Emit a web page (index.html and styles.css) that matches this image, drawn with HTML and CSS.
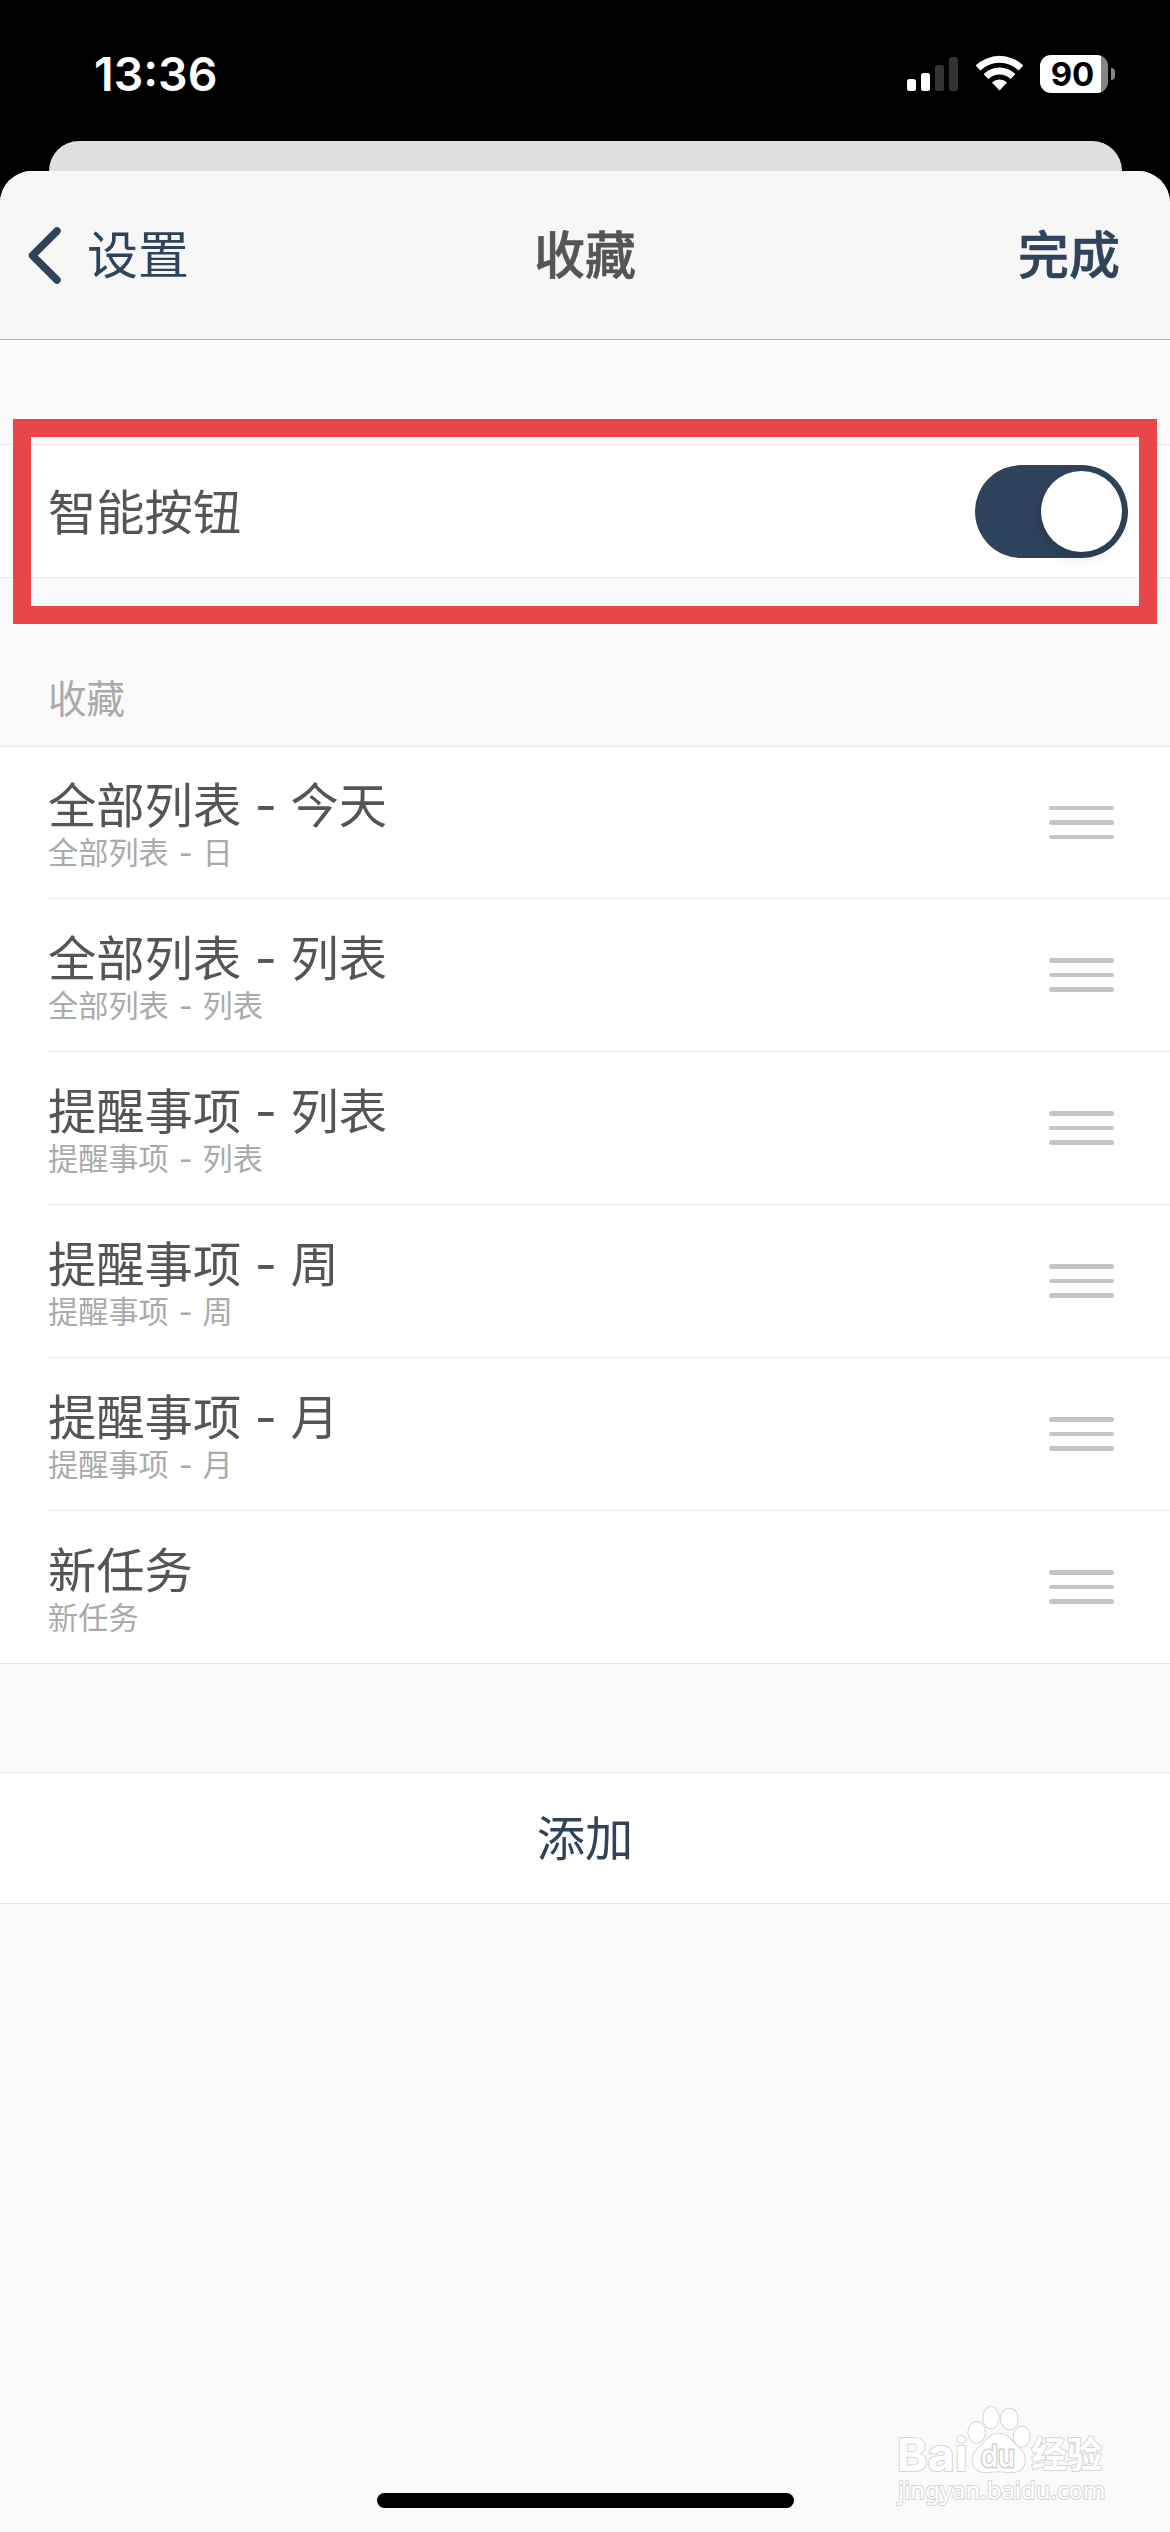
FILE: index.html
```
<!DOCTYPE html>
<html lang="zh-CN">
<head>
  <meta charset="UTF-8">
  <meta name="viewport" content="width=device-width, initial-scale=1.0">
  <title>收藏</title>
  <link rel="stylesheet" href="styles.css">
</head>
<body>
  <div class="status-bar">
    <div class="time">13:36</div>
    <div class="status-icons">
      <svg class="signal" viewBox="0 0 51 34" aria-hidden="true">
        <rect x="0" y="22" width="9" height="12" rx="2.5" fill="#fff"/>
        <rect x="14" y="16" width="9" height="18" rx="2.5" fill="#fff"/>
        <rect x="28" y="8" width="9" height="26" rx="2.5" fill="#333"/>
        <rect x="42" y="0" width="9" height="34" rx="2.5" fill="#333"/>
      </svg>
      <svg class="wifi" viewBox="0 0 49 36" aria-hidden="true">
        <path d="M0.6 10.6A34.2 34.2 0 0 1 48.4 10.6L43.6 15.6A27.3 27.3 0 0 0 5.4 15.6Z"/>
        <path d="M8.6 19A22.6 22.6 0 0 1 40.4 19L35.6 24A15.7 15.7 0 0 0 13.4 24Z"/>
        <path d="M16.9 27.6A11 11 0 0 1 32.1 27.6L24.5 35.5Z"/>
      </svg>
      <div class="battery">
        <div class="battery-body">90</div>
        <div class="battery-cap"></div>
      </div>
    </div>
  </div>

  <div class="back-sheet"></div>

  <div class="sheet">
    <div class="nav">
      <div class="nav-back">
        <svg viewBox="0 0 33 57" aria-hidden="true">
          <path d="M29 4L4.5 28.5L29 53"/>
        </svg>
        <span>设置</span>
      </div>
      <div class="nav-title">收藏</div>
      <div class="nav-done">完成</div>
    </div>

    <div class="switch-row">
      <span class="row-title">智能按钮</span>
      <div class="toggle" role="switch" aria-checked="true"><div class="knob"></div></div>
      <div class="highlight"></div>
    </div>

    <div class="section-title">收藏</div>

    <div class="list">
      <div class="item">
        <div class="item-text">
          <div class="row-title">全部列表 - 今天</div>
          <div class="row-sub">全部列表 - 日</div>
        </div>
        <div class="handle"><i></i><i></i><i></i></div>
      </div>
      <div class="item">
        <div class="item-text">
          <div class="row-title">全部列表 - 列表</div>
          <div class="row-sub">全部列表 - 列表</div>
        </div>
        <div class="handle"><i></i><i></i><i></i></div>
      </div>
      <div class="item">
        <div class="item-text">
          <div class="row-title">提醒事项 - 列表</div>
          <div class="row-sub">提醒事项 - 列表</div>
        </div>
        <div class="handle"><i></i><i></i><i></i></div>
      </div>
      <div class="item">
        <div class="item-text">
          <div class="row-title">提醒事项 - 周</div>
          <div class="row-sub">提醒事项 - 周</div>
        </div>
        <div class="handle"><i></i><i></i><i></i></div>
      </div>
      <div class="item">
        <div class="item-text">
          <div class="row-title">提醒事项 - 月</div>
          <div class="row-sub">提醒事项 - 月</div>
        </div>
        <div class="handle"><i></i><i></i><i></i></div>
      </div>
      <div class="item">
        <div class="item-text">
          <div class="row-title">新任务</div>
          <div class="row-sub">新任务</div>
        </div>
        <div class="handle"><i></i><i></i><i></i></div>
      </div>
    </div>

    <div class="add">添加</div>
  </div>

  <svg class="watermark" viewBox="0 0 900 456" aria-hidden="true">
    <g class="mark">
      <text class="mark-baidu" x="80" y="273" textLength="212" lengthAdjust="spacingAndGlyphs">Bai</text>
      <ellipse cx="320" cy="157" rx="25" ry="31"/>
      <ellipse cx="363" cy="113" rx="23" ry="32"/>
      <ellipse cx="418" cy="117" rx="25" ry="31"/>
      <ellipse cx="455" cy="170" rx="24" ry="30"/>
      <path d="M386 161C415 161 424 183 438 196C455 211 466 223 464 244C462 269 440 280 414 276C394 273 378 273 358 276C330 280 309 268 308 243C307 222 320 210 334 197C350 182 358 161 386 161Z"/>
      <text class="mark-du" x="332" y="260" textLength="102" lengthAdjust="spacingAndGlyphs">du</text>
      <text class="mark-cn" x="484" y="265" textLength="212" lengthAdjust="spacingAndGlyphs">经验</text>
      <text class="mark-url" x="84" y="358" textLength="622" lengthAdjust="spacingAndGlyphs">jingyan.baidu.com</text>
    </g>
  </svg>

  <div class="home-bar"></div>
</body>
</html>
```
FILE: styles.css
```
* {
  box-sizing: border-box;
}

body {
  width: 1170px;
  height: 2532px;
  margin: 0;
  position: relative;
  overflow: hidden;
  display: flex;
  flex-direction: column;
  background: #000;
  color: #555;
  font-family: Inter, "Noto Sans CJK SC", sans-serif;
}

/* 状态栏 */
.status-bar {
  height: 141px;
  padding: 55px 55px 0 94px;
  display: flex;
  justify-content: space-between;
  align-items: flex-start;
  color: #fff;
}

.time {
  font-size: 46.5px;
  font-weight: 600;
  line-height: 38px;
}

.status-icons {
  display: flex;
  align-items: flex-start;
}

.signal {
  width: 51px;
  height: 34px;
  margin: 2px 16.5px 0 0;
}

.wifi {
  width: 49px;
  height: 36px;
  margin-right: 16.5px;
  fill: #fff;
}

.battery {
  display: flex;
  align-items: center;
  gap: 3px;
}

.battery-body {
  width: 68px;
  height: 38px;
  padding-right: 3px;
  border-radius: 11px;
  background: linear-gradient(to right, #fff 61px, #858585 61px);
  color: #000;
  font-size: 33px;
  font-weight: 700;
  line-height: 38px;
  text-align: center;
}

.battery-cap {
  width: 4px;
  height: 12px;
  border-radius: 0 6px 6px 0;
  background: #858585;
}

/* 面板 */
.back-sheet {
  height: 30px;
  margin: 0 48.5px;
  border-radius: 30px 30px 0 0;
  background: #dfdfdf;
}

.sheet {
  flex: 1;
  border-radius: 32px 32px 0 0;
  background: #fafafa;
  overflow: hidden;
}

.nav {
  height: 169px;
  padding: 2px 50px 0 28px;
  display: grid;
  grid-template-columns: 1fr auto 1fr;
  align-items: center;
  background: #f7f7f7;
  border-bottom: 1px solid #b0b0b0;
  font-size: 51px;
  line-height: 60px;
}

.nav-back {
  margin-right: -22px;
  display: flex;
  align-items: center;
  gap: 26px;
  color: #2f435b;
}

.nav-back svg {
  width: 33px;
  height: 57px;
  margin-top: -2px;
  fill: none;
  stroke: #2f435b;
  stroke-width: 7.5;
  stroke-linecap: round;
  stroke-linejoin: round;
}

.nav-title {
  margin-left: 22px;
  font-weight: 500;
  -webkit-text-stroke: 0.6px #555;
}

.nav-done {
  text-align: right;
  font-weight: 500;
  color: #2f435b;
  -webkit-text-stroke: 0.6px #2f435b;
}

.switch-row {
  height: 134px;
  margin-top: 104px;
  padding: 0 42px 0 48px;
  position: relative;
  display: flex;
  align-items: center;
  justify-content: space-between;
  background: #fff;
  border-top: 1px solid #e8e8e8;
  border-bottom: 1px solid #e8e8e8;
}

.switch-row .row-title {
  padding-top: 4px;
}

.toggle {
  width: 153px;
  height: 93px;
  padding: 6px;
  display: flex;
  justify-content: flex-end;
  border-radius: 47px;
  background: #2f435b;
}

.knob {
  width: 81px;
  height: 81px;
  border-radius: 50%;
  background: #fff;
  box-shadow: -2px 5px 14px rgba(0, 0, 0, 0.15);
}

.highlight {
  position: absolute;
  top: -26px;
  left: 13px;
  right: 13px;
  height: 205px;
  border: 18px solid #e8464b;
}

.section-title {
  height: 168px;
  padding: 93px 48px 0;
  font-size: 38.5px;
  line-height: 56px;
  color: #aaa;
}

/* 列表 */
.list {
  border-top: 1px solid #e8e8e8;
  border-bottom: 1px solid #e8e8e8;
  background: #fff;
}

.item {
  height: 153px;
  margin-left: 48px;
  padding-right: 56px;
  display: flex;
  align-items: center;
  justify-content: space-between;
  border-bottom: 1px solid #e8e8e8;
}

.item:first-child,
.item:last-child {
  height: 152px;
}

.item:last-child {
  border-bottom: none;
}

.item-text {
  padding-top: 7px;
}

.row-title {
  font-size: 48.3px;
  line-height: 54px;
}

.row-sub {
  font-size: 30.2px;
  line-height: 40px;
  word-spacing: 1.5px;
  color: #aaa;
}

.handle {
  width: 65px;
  display: flex;
  flex-direction: column;
  gap: 10px;
}

.handle i {
  height: 4.5px;
  border-radius: 3px;
  background: #c5c5c7;
}

.add {
  height: 132px;
  margin-top: 108px;
  background: #fff;
  border-top: 1px solid #e8e8e8;
  border-bottom: 1px solid #e8e8e8;
  color: #2f435b;
  font-size: 48.3px;
  line-height: 132px;
  text-align: center;
}

.watermark {
  position: absolute;
  left: 870px;
  top: 2380px;
  width: 300px;
  height: 152px;
}

.mark {
  fill: #fff;
  stroke: #d6d6d6;
  stroke-width: 6;
  paint-order: stroke;
}

.mark-baidu {
  font: 700 136px Inter, sans-serif;
}

.mark-du {
  font: 500 90px Inter, sans-serif;
  stroke: #cfcfcf;
  stroke-width: 9;
}

.mark-cn {
  font: 700 108px "Noto Sans CJK SC", sans-serif;
}

.mark-url {
  font: 400 72px "Noto Sans", sans-serif;
}

.home-bar {
  position: absolute;
  left: 377px;
  bottom: 24px;
  width: 417px;
  height: 15px;
  border-radius: 8px;
  background: #000;
}
```
